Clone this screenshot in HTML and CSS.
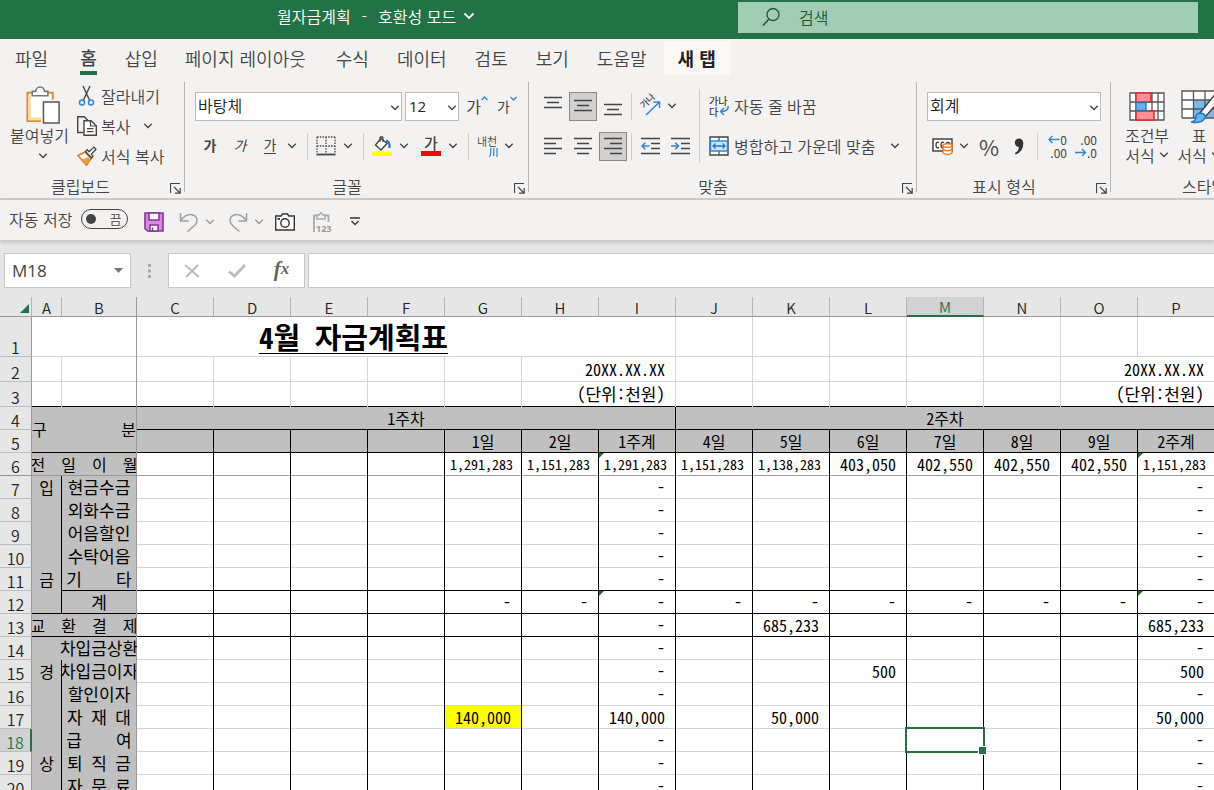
FILE: index.html
```html
<!DOCTYPE html>
<html lang="ko">
<head>
<meta charset="utf-8">
<meta name="viewport" content="width=device-width, initial-scale=1">
<title>월자금계획</title>
<link rel="stylesheet" href="styles.css">
</head>
<body>
<svg class="defs" aria-hidden="true">
  <symbol id="chev" viewBox="0 0 8 6"><path d="M1 1.2 4 4.2 7 1.2" fill="none" stroke="currentColor" stroke-width="1.1"/></symbol>
  <symbol id="launch" viewBox="0 0 11 11"><path d="M.5 10V.5H10M4 4l6 6M10.200 5v5.200H5" fill="none" stroke="#444" stroke-width="1.2"/></symbol>
</svg>

<header class="titlebar">
  <button class="doc-title" type="button"><span class="pre">월자금계획 <span class="dash"> - </span> 호환성 모드</span>
    <svg width="12" height="8" viewBox="0 0 12 8"><path d="M1.500 1.500 6 6l4.500-4.500" fill="none" stroke="#fff" stroke-width="1.800"/></svg>
  </button>
  <label class="search">
    <svg width="18" height="20" viewBox="0 0 18 20"><circle cx="11" cy="7.500" r="6" fill="none" stroke="#185c37" stroke-width="1.300"/><path d="M7 12 1 18.500" stroke="#185c37" stroke-width="1.500"/></svg>
    <input type="text" placeholder="검색" aria-label="검색">
  </label>
</header>

<nav class="tabs">
  <button class="tab tab-file" type="button">파일</button>
  <button class="tab tab-home" type="button"><span>홈</span></button>
  <button class="tab" type="button">삽입</button>
  <button class="tab tab-wide" type="button">페이지 레이아웃</button>
  <button class="tab" type="button">수식</button>
  <button class="tab" type="button">데이터</button>
  <button class="tab" type="button">검토</button>
  <button class="tab" type="button">보기</button>
  <button class="tab" type="button">도움말</button>
  <button class="tab tab-new" type="button">새 탭</button>
</nav>

<section class="ribbon">
  <div class="group g-clip">
    <div class="tools">
      <button class="big" type="button">
        <svg class="paste" width="36" height="40" viewBox="0 0 36 40"><path d="M2 7h26v29H2z" fill="#fff" stroke="#e08a2c" stroke-width="2"/><path d="M4.500 9.500v24H16" fill="none" stroke="#fbdc9c" stroke-width="2.500"/><path d="M7 10V5.500h3.500a4.500 4.500 0 0 1 9 0H23V10z" fill="#fff" stroke="#777" stroke-width="1.600"/><path d="M16 14h19v25H16z" fill="#f3f2f1"/><path d="M18.500 16.500h16V38h-16z" fill="#fff" stroke="#555" stroke-width="1.500"/></svg>
        <span>붙여넣기</span>
        <svg class="chev" width="10" height="8"><use href="#chev"/></svg>
      </button>
      <div class="side">
        <button type="button"><svg width="20" height="20" viewBox="0 0 20 20"><path d="M6 0l6.500 14M13 0 6.500 14" stroke="#444" stroke-width="1.400"/><circle cx="5" cy="16.500" r="2.500" fill="none" stroke="#2b88d8" stroke-width="1.500"/><circle cx="14" cy="16.500" r="2.500" fill="none" stroke="#2b88d8" stroke-width="1.500"/></svg>잘라내기</button>
        <button type="button"><svg width="20" height="20" viewBox="0 0 20 20"><path d="M6.500 16.500H.7V.7h6.500L11 4.500" fill="none" stroke="#444" stroke-width="1.400"/><path d="M7 4.700h7l5.300 5v9.500H7z" fill="#fff" stroke="#444" stroke-width="1.400"/><path d="M13.500 5v5H19M10 12.700h6.500M10 15.700h6.500" fill="none" stroke="#444" stroke-width="1.200"/></svg>복사<svg class="chev gap" width="10" height="8"><use href="#chev"/></svg></button>
        <button type="button"><svg width="20" height="20" viewBox="0 0 20 20"><path d="M1 9.500 8 6l6 6.500-4.500 6.800z" fill="#fff" stroke="#e07b1f" stroke-width="1.500"/><path d="M3 12c3 1.500 5 1 8-1l2 2.500-4 5z" fill="#f29a3c"/><path d="M8.500 5.500l6 6.500 1.500-1.700-1.700-2 4.700-5-2-2.200-5 4.600-1.700-2z" fill="#fff" stroke="#444" stroke-width="1.300"/></svg>서식 복사</button>
      </div>
    </div>
    <div class="caption"><span>클립보드</span><button type="button" aria-label="클립보드 옵션"><svg width="11" height="11"><use href="#launch"/></svg></button></div>
  </div>

  <div class="group g-font">
    <div class="tools rows">
      <div class="row">
        <span class="combo font-name"><select aria-label="글꼴"><option>바탕체</option></select><svg class="chev" width="10" height="8"><use href="#chev"/></svg></span>
        <span class="combo font-size"><select aria-label="글꼴 크기"><option>12</option></select><svg class="chev" width="10" height="8"><use href="#chev"/></svg></span>
        <button class="ic" type="button" aria-label="글꼴 크기 크게"><span class="ga-l">가</span><svg class="up" width="7" height="16" viewBox="0 0 7 16"><path d="M.5 4 3.500 1l3 3" fill="none" stroke="#2b88d8" stroke-width="1.400"/></svg></button>
        <button class="ic" type="button" aria-label="글꼴 크기 작게"><span class="ga-m">가</span><svg class="up" width="7" height="16" viewBox="0 0 7 16"><path d="M.5 1l3 3 3-3" fill="none" stroke="#2b88d8" stroke-width="1.400"/></svg></button>
      </div>
      <div class="row">
        <button class="ic ga bold" type="button">가</button>
        <button class="ic ga ital" type="button">가</button>
        <button class="ic ga under" type="button"><span>가</span></button>
        <button class="dd" type="button" aria-label="밑줄 종류"><svg class="chev" width="10" height="8"><use href="#chev"/></svg></button>
        <i class="sep"></i>
        <button class="ic" type="button" aria-label="테두리"><svg width="20" height="20" viewBox="0 0 20 20"><path d="M1 1h18M1 10h18M1 1v16M10 1v16M19 1v16" fill="none" stroke="#444" stroke-width="1.300" stroke-dasharray="1.500 1.300"/><path d="M.5 18.500h19" stroke="#444" stroke-width="1.800"/></svg></button>
        <button class="dd" type="button" aria-label="테두리 종류"><svg class="chev" width="10" height="8"><use href="#chev"/></svg></button>
        <i class="sep"></i>
        <button class="ic" type="button" aria-label="채우기 색"><svg width="20" height="20" viewBox="0 0 20 20"><path d="M9 2.500 3.500 9l5.500 5L15 7.500z" fill="#fff" stroke="#444" stroke-width="1.400"/><path d="M8 6V1.500q1.500-1.500 3 0V6" fill="none" stroke="#444" stroke-width="1.200"/><path d="M14 4.500q4 1 3.500 7.500" fill="none" stroke="#1f78c1" stroke-width="2.200"/><path d="M0 15.500h20V20H0z" fill="#ff0"/></svg></button>
        <button class="dd" type="button" aria-label="채우기 색 선택"><svg class="chev" width="10" height="8"><use href="#chev"/></svg></button>
        <button class="ic ga color" type="button" aria-label="글꼴 색"><span>가</span></button>
        <button class="dd" type="button" aria-label="글꼴 색 선택"><svg class="chev" width="10" height="8"><use href="#chev"/></svg></button>
        <i class="sep"></i>
        <button class="ic ruby" type="button" aria-label="윗주"><span>내천</span><svg width="9" height="9" viewBox="0 0 9 9"><path d="M1.700 0v5q0 2-1.200 4M4.700 0v8M8 0v9" fill="none" stroke="#2b88d8" stroke-width="1.200"/></svg></button>
        <button class="dd" type="button" aria-label="윗주 설정"><svg class="chev" width="10" height="8"><use href="#chev"/></svg></button>
      </div>
    </div>
    <div class="caption"><span>글꼴</span><button type="button" aria-label="글꼴 옵션"><svg width="11" height="11"><use href="#launch"/></svg></button></div>
  </div>

  <div class="group g-align">
    <div class="tools split">
      <div class="rows align-left">
        <div class="row">
          <button class="ic" type="button" aria-label="위쪽 맞춤"><svg width="18" height="20" viewBox="0 0 18 20"><path d="M0 1.500h18M3 6.500h12M0 11.500h18" stroke="#444" stroke-width="1.500"/></svg></button>
          <button class="ic on" type="button" aria-label="가운데 맞춤"><svg width="18" height="20" viewBox="0 0 18 20"><path d="M0 4.500h18M3 9.500h12M0 14.500h18" stroke="#444" stroke-width="1.500"/></svg></button>
          <button class="ic" type="button" aria-label="아래쪽 맞춤"><svg width="18" height="20" viewBox="0 0 18 20"><path d="M0 8.500h18M3 13.500h12M0 18.500h18" stroke="#444" stroke-width="1.500"/></svg></button>
          <i class="sep near"></i>
          <button class="ic" type="button" aria-label="방향"><svg width="22" height="22" viewBox="0 0 22 22"><text transform="translate(5 14) rotate(-45)" class="rot">가나</text><path d="M7 20 20 7.500M14.500 7h6v6" fill="none" stroke="#2b88d8" stroke-width="1.500"/></svg></button>
          <button class="dd" type="button" aria-label="방향 선택"><svg class="chev" width="10" height="8"><use href="#chev"/></svg></button>
        </div>
        <div class="row">
          <button class="ic" type="button" aria-label="왼쪽 맞춤"><svg width="18" height="18" viewBox="0 0 18 18"><path d="M0 1.500h18M0 6.500h12M0 11.500h18M0 16.500h12" stroke="#444" stroke-width="1.500"/></svg></button>
          <button class="ic" type="button" aria-label="텍스트 가운데 맞춤"><svg width="18" height="18" viewBox="0 0 18 18"><path d="M0 1.500h18M3 6.500h12M0 11.500h18M3 16.500h12" stroke="#444" stroke-width="1.500"/></svg></button>
          <button class="ic on" type="button" aria-label="오른쪽 맞춤"><svg width="18" height="18" viewBox="0 0 18 18"><path d="M0 1.500h18M6 6.500h12M0 11.500h18M6 16.500h12" stroke="#444" stroke-width="1.500"/></svg></button>
          <i class="sep near"></i>
          <button class="ic" type="button" aria-label="내어쓰기"><svg width="19" height="18" viewBox="0 0 19 18"><path d="M0 1.500h19M10 6.500h9M10 11.500h9M0 16.500h19" stroke="#444" stroke-width="1.500"/><path d="M8.500 9H1M4.300 5.700 1 9l3.300 3.300" fill="none" stroke="#2b88d8" stroke-width="1.500"/></svg></button>
          <button class="ic" type="button" aria-label="들여쓰기"><svg width="19" height="18" viewBox="0 0 19 18"><path d="M0 1.500h19M10 6.500h9M10 11.500h9M0 16.500h19" stroke="#444" stroke-width="1.500"/><path d="M0 9h7.500M4.200 5.700 7.500 9l-3.300 3.300" fill="none" stroke="#2b88d8" stroke-width="1.500"/></svg></button>
        </div>
      </div>
      <i class="vline"></i>
      <div class="rows">
        <button class="row label-btn" type="button"><span class="wrap-ic"><span>가나</span><span>다</span><svg width="10" height="10" viewBox="0 0 10 10"><path d="M9.200 0q.5 5.500-7.500 5.500M5 2 1.500 5.500 5 9" fill="none" stroke="#2b88d8" stroke-width="1.500"/></svg></span>자동 줄 바꿈</button>
        <button class="row label-btn" type="button"><svg class="merge" width="20" height="20" viewBox="0 0 20 20"><path d="M1 1h18v18H1z" fill="#fff" stroke="#444" stroke-width="1.400"/><path d="M10 1v4M10 15v4" stroke="#444" stroke-width="1.200"/><path d="M1.500 5h17v10h-17z" fill="#cfe6f8" stroke="#2b88d8" stroke-width="1.500"/><path d="M4 10h12M6.500 7.500 4 10l2.500 2.500M13.500 7.500 16 10l-2.500 2.500" fill="none" stroke="#1f78c1" stroke-width="1.300"/></svg>병합하고 가운데 맞춤<svg class="chev gap" width="10" height="8"><use href="#chev"/></svg></button>
      </div>
    </div>
    <div class="caption"><span>맞춤</span><button type="button" aria-label="맞춤 옵션"><svg width="11" height="11"><use href="#launch"/></svg></button></div>
  </div>

  <div class="group g-num">
    <div class="tools rows">
      <div class="row">
        <span class="combo num-format"><select aria-label="표시 형식"><option>회계</option></select><svg class="chev" width="10" height="8"><use href="#chev"/></svg></span>
      </div>
      <div class="row">
        <button class="ic" type="button" aria-label="회계 표시 형식"><svg width="21" height="18" viewBox="0 0 21 18"><path d="M1 2h19v12H1z" fill="#fff" stroke="#444" stroke-width="1.500"/><path d="M7 5.500q-3-1-3 2.500t3 2.500M12 5.500q-3-1-3 2.500t3 2.500M14 8q0-2.500 2-2.500T18 8" fill="none" stroke="#444" stroke-width="1.400"/><path d="M11 8.500v7.500q4.500 3 9 0V8.500z" fill="#fff" stroke="#e07b1f" stroke-width="1.400"/><ellipse cx="15.500" cy="8.500" rx="4.500" ry="1.800" fill="#fff" stroke="#e07b1f" stroke-width="1.400"/><path d="M11 12.300q4.500 3 9 0" fill="none" stroke="#e07b1f" stroke-width="1.400"/></svg></button>
        <button class="dd" type="button" aria-label="통화 선택"><svg class="chev" width="10" height="8"><use href="#chev"/></svg></button>
        <button class="ic percent" type="button">%</button>
        <button class="ic" type="button" aria-label="쉼표 스타일"><svg width="11" height="17" viewBox="0 0 11 17"><circle cx="5" cy="4.700" r="4.200" fill="#333"/><path d="M9.200 4.500Q10 13 1.500 16.500L1 15Q5 13 5 8z" fill="#333"/></svg></button>
        <i class="sep near"></i>
        <button class="ic dec" type="button" aria-label="자릿수 늘림"><span><svg width="12" height="9" viewBox="0 0 12 9"><path d="M11.500 4.500H1M4.500 1 1 4.500 4.500 8" fill="none" stroke="#2b88d8" stroke-width="1.400"/></svg>0</span><span>.00</span></button>
        <button class="ic dec" type="button" aria-label="자릿수 줄임"><span>.00</span><span><svg width="12" height="9" viewBox="0 0 12 9"><path d="M0 4.500h10.500M7 1l3.500 3.500L7 8" fill="none" stroke="#2b88d8" stroke-width="1.400"/></svg>.0</span></button>
      </div>
    </div>
    <div class="caption"><span>표시 형식</span><button type="button" aria-label="표시 형식 옵션"><svg width="11" height="11"><use href="#launch"/></svg></button></div>
  </div>

  <div class="group g-style">
    <div class="tools">
      <button class="big cond" type="button">
        <svg width="36" height="30" viewBox="0 0 36 30"><path d="M1 1h34v27H1z" fill="#fff"/><path d="M1 1h34v27H1zM1 10h34M1 19h34M7 1v27M29 1v27M23 1v27" fill="none" stroke="#555" stroke-width="1.300"/><path d="M7 1h15v9H7zM7 19h18v9H7z" fill="#ff8f94" stroke="#e3262e" stroke-width="1.500"/><path d="M7 10.500h10v8H7z" fill="#6cb1ee" stroke="#1f78c1" stroke-width="1.300"/></svg>
        <span>조건부</span>
        <span>서식<svg class="chev" width="10" height="8"><use href="#chev"/></svg></span>
      </button>
      <button class="big" type="button">
        <svg width="36" height="34" viewBox="0 0 36 34"><path d="M1 1h36v27H1z" fill="#fff"/><path d="M12 10h26v18H12z" fill="#7ab9f0"/><path d="M1 28V1h36M1 10h36M1 19h36M1 28h36M12.500 1v27M24 1v27" fill="none" stroke="#555" stroke-width="1.300"/><path d="M36 2 19 23l5 4 16-18z" fill="#fff" stroke="#444" stroke-width="1.400"/><path d="M10 32q5-1 5-5t5-4q5 1 4 5-3 6-14 4z" fill="#6cb1ee" stroke="#1f78c1" stroke-width="1.500"/></svg>
        <span>표</span>
        <span>서식<svg class="chev" width="10" height="8"><use href="#chev"/></svg></span>
      </button>
    </div>
    <div class="caption"><span>스타일</span></div>
  </div>
</section>

<section class="qat">
  <label class="autosave"><span>자동 저장</span><input type="checkbox"><span class="switch">끔</span></label>
  <button class="q-save" type="button" aria-label="저장"><svg width="20" height="20" viewBox="0 0 20 20"><path d="M1 1h18v18H3.500L1 16.500z" fill="#d58be0" stroke="#8a2f9c" stroke-width="1.600"/><path d="M5 1h10v7H5zM6 13h8v6H6z" fill="#fff" stroke="#8a2f9c" stroke-width="1.500"/><path d="M8.500 15.500V19" stroke="#8a2f9c" stroke-width="1.500"/></svg></button>
  <button class="q-undo" type="button" aria-label="실행 취소"><svg width="20" height="20" viewBox="0 0 20 20"><path d="M1.500 1v8h8M1.500 9Q6 2 12 2.500q6 1 6 6 0 3-3 5.500L8.500 19.500" fill="none" stroke="#a0a0a0" stroke-width="1.500"/></svg></button>
  <button class="q-dd" type="button" aria-label="실행 취소 목록"><svg class="chev" width="10" height="8"><use href="#chev"/></svg></button>
  <button class="q-undo" type="button" aria-label="다시 실행"><svg width="20" height="20" viewBox="0 0 20 20"><path d="M18.500 1v8h-8M18.500 9Q14 2 8 2.500q-6 1-6 6 0 3 3 5.500l6.500 5.500" fill="none" stroke="#a0a0a0" stroke-width="1.500"/></svg></button>
  <button class="q-dd" type="button" aria-label="다시 실행 목록"><svg class="chev" width="10" height="8"><use href="#chev"/></svg></button>
  <button class="q-cam" type="button" aria-label="카메라"><svg width="20" height="18" viewBox="0 0 20 18"><path d="M.7 3h5.500L7.500 1h5l1.300 2h5.500v14H.7z" fill="#fff" stroke="#333" stroke-width="1.400"/><circle cx="10" cy="10" r="4.200" fill="none" stroke="#333" stroke-width="1.400"/><path d="M2.500 5h2.500v1.800H2.500z" fill="#333"/></svg></button>
  <button class="q-123" type="button" aria-label="값 붙여넣기"><svg width="20" height="22" viewBox="0 0 20 22"><path d="M2 21V4.500h14.500V11" fill="none" stroke="#aaa" stroke-width="1.800"/><path d="M5 8V4h2.500q1.500-5 3 0H13v4z" fill="#f3f2f1" stroke="#aaa" stroke-width="1.400"/><text x="4" y="21" class="n123">123</text></svg></button>
  <button class="q-more" type="button" aria-label="빠른 실행 도구 모음 사용자 지정"><svg width="10" height="9" viewBox="0 0 10 9"><path d="M0 1h10M1.500 4 5 7.500 8.500 4" fill="none" stroke="#333" stroke-width="1.300"/></svg></button>
</section>

<section class="formula">
  <div class="namebox"><input type="text" value="M18" aria-label="이름 상자"><svg width="9" height="5" viewBox="0 0 9 5"><path d="M0 0h9L4.500 5z" fill="#777"/></svg></div>
  <svg class="grip" width="3" height="14" viewBox="0 0 3 14"><path d="M0 0h3v3H0zM0 5.500h3v3H0zM0 11h3v3H0z" fill="#aaa"/></svg>
  <div class="fx">
    <button type="button" aria-label="취소"><svg width="16" height="14" viewBox="0 0 16 14"><path d="M1 1l14 12M14 1 2 13" stroke="#bbb" stroke-width="2"/></svg></button>
    <button type="button" aria-label="입력"><svg width="18" height="14" viewBox="0 0 18 14"><path d="M1 7.500 6.500 12 17 1" fill="none" stroke="#bbb" stroke-width="2.800"/></svg></button>
    <button type="button" class="fxi">f<small>x</small></button>
  </div>
  <input class="fbar" type="text" aria-label="수식 입력줄">
</section>

<main class="sheet">
<table>
<colgroup><col class="c-h"><col class="c-a"><col class="c-b"><col span="13" class="c-n"></colgroup>
<thead><tr><th class="corner"><svg width="9" height="9" viewBox="0 0 9 9"><path d="M9 0v9H0z" fill="#217346"/></svg></th><th>A</th><th class="fz">B</th><th>C</th><th>D</th><th>E</th><th>F</th><th>G</th><th>H</th><th>I</th><th>J</th><th>K</th><th>L</th><th class="sel">M</th><th>N</th><th>O</th><th>P</th></tr></thead>
<tbody class="top">
<tr class="r1"><th>1</th><td colspan="9" class="title"><span>4월 자금계획표</span></td><td></td><td></td><td></td><td></td><td></td><td></td><td></td></tr>
<tr class="r2"><th>2</th><td></td><td class="fz"></td><td></td><td></td><td></td><td></td><td></td><td colspan="2" class="meta">20XX.XX.XX</td><td></td><td></td><td></td><td></td><td></td><td colspan="2" class="meta">20XX.XX.XX</td></tr>
<tr class="r2 kb"><th>3</th><td></td><td class="fz"></td><td></td><td></td><td></td><td></td><td></td><td colspan="2" class="meta unit">(단위:천원)</td><td></td><td></td><td></td><td></td><td></td><td colspan="2" class="meta unit">(단위:천원)</td></tr>
</tbody>
<tbody class="heads">
<tr><th>4</th><td colspan="2" rowspan="2" class="fz"><div class="spread"><span>구</span><span>분</span></div></td><td colspan="7">1주차</td><td colspan="7">2주차</td></tr>
<tr><th>5</th><td></td><td></td><td></td><td></td><td>1일</td><td>2일</td><td>1주계</td><td>4일</td><td>5일</td><td>6일</td><td>7일</td><td>8일</td><td>9일</td><td>2주계</td></tr>
</tbody>
<tbody class="data">
<tr class="fr"><th>6</th><td colspan="2" class="lab fz"><div class="pre">전  일  이  월</div></td><td></td><td></td><td></td><td></td><td class="long">1,291,283</td><td class="long">1,151,283</td><td class="long flag">1,291,283</td><td class="long">1,151,283</td><td class="long">1,138,283</td><td>403,050</td><td>402,550</td><td>402,550</td><td>402,550</td><td class="long flag">1,151,283</td></tr>
<tr><th>7</th><td class="a">입</td><td class="b fz"><div>현금수금</div></td><td></td><td></td><td></td><td></td><td></td><td></td><td>-</td><td></td><td></td><td></td><td></td><td></td><td></td><td>-</td></tr>
<tr><th>8</th><td class="a"></td><td class="b fz"><div>외화수금</div></td><td></td><td></td><td></td><td></td><td></td><td></td><td>-</td><td></td><td></td><td></td><td></td><td></td><td></td><td>-</td></tr>
<tr><th>9</th><td class="a"></td><td class="b fz"><div>어음할인</div></td><td></td><td></td><td></td><td></td><td></td><td></td><td>-</td><td></td><td></td><td></td><td></td><td></td><td></td><td>-</td></tr>
<tr><th>10</th><td class="a"></td><td class="b fz"><div>수탁어음</div></td><td></td><td></td><td></td><td></td><td></td><td></td><td>-</td><td></td><td></td><td></td><td></td><td></td><td></td><td>-</td></tr>
<tr class="kb"><th>11</th><td class="a open">금</td><td class="b fz"><div class="pre">기    타</div></td><td></td><td></td><td></td><td></td><td></td><td></td><td>-</td><td></td><td></td><td></td><td></td><td></td><td></td><td>-</td></tr>
<tr class="kb"><th>12</th><td class="a"></td><td class="b fz"><div>계</div></td><td></td><td></td><td></td><td></td><td>-</td><td>-</td><td class="flag">-</td><td>-</td><td>-</td><td>-</td><td>-</td><td>-</td><td>-</td><td class="flag">-</td></tr>
<tr class="kb"><th>13</th><td colspan="2" class="lab fz"><div class="pre">교  환  결  제</div></td><td></td><td></td><td></td><td></td><td></td><td></td><td>-</td><td></td><td>685,233</td><td></td><td></td><td></td><td></td><td>685,233</td></tr>
<tr><th>14</th><td class="a noline"></td><td class="b fz spill"><div>차입금상환</div></td><td></td><td></td><td></td><td></td><td></td><td></td><td>-</td><td></td><td></td><td></td><td></td><td></td><td></td><td>-</td></tr>
<tr><th>15</th><td class="a">경</td><td class="b fz"><div>차입금이자</div></td><td></td><td></td><td></td><td></td><td></td><td></td><td>-</td><td></td><td></td><td>500</td><td></td><td></td><td></td><td>500</td></tr>
<tr><th>16</th><td class="a"></td><td class="b fz"><div>할인이자</div></td><td></td><td></td><td></td><td></td><td></td><td></td><td>-</td><td></td><td></td><td></td><td></td><td></td><td></td><td>-</td></tr>
<tr><th>17</th><td class="a"></td><td class="b fz"><div class="pre">자 재 대</div></td><td></td><td></td><td></td><td></td><td class="hl">140,000</td><td></td><td>140,000</td><td></td><td>50,000</td><td></td><td></td><td></td><td></td><td>50,000</td></tr>
<tr><th class="sel">18</th><td class="a"></td><td class="b fz"><div class="pre">급    여</div></td><td></td><td></td><td></td><td></td><td></td><td></td><td>-</td><td></td><td></td><td></td><td class="cursor"></td><td></td><td></td><td>-</td></tr>
<tr><th>19</th><td class="a">상</td><td class="b fz"><div class="pre">퇴 직 금</div></td><td></td><td></td><td></td><td></td><td></td><td></td><td>-</td><td></td><td></td><td></td><td></td><td></td><td></td><td>-</td></tr>
<tr><th>20</th><td class="a"></td><td class="b fz"><div class="pre">자 문 료</div></td><td></td><td></td><td></td><td></td><td></td><td></td><td>-</td><td></td><td></td><td></td><td></td><td></td><td></td><td>-</td></tr>
</tbody>
</table>
</main>
</body>
</html>
```

FILE: styles.css
```css
:root {
  --green: #217346;
  --ui: "Noto Sans CJK KR", sans-serif;
  --cell: "Noto Sans Mono CJK KR", "Noto Sans CJK KR", monospace;
  --grid: #d4d4d4;
  --freeze: #999;
}
* { box-sizing: border-box; }
body {
  margin: 0;
  height: 100vh;
  display: flex;
  flex-direction: column;
  overflow: hidden;
  background: #e6e6e6;
  color: #444;
  font: 350 16px/20px var(--ui);
}
button, input, select { font: inherit; color: inherit; }
button { border: 0; padding: 0; background: none; white-space: nowrap; }
svg { display: block; flex: none; overflow: visible; }
.defs { position: absolute; width: 0; height: 0; overflow: hidden; }
.pre { white-space: pre; }

/* title bar */
.titlebar {
  flex: none;
  height: 39px;
  display: flex;
  align-items: flex-start;
  background: var(--green);
  color: #fff;
}
.doc-title {
  display: flex;
  align-items: center;
  gap: 7px;
  height: 32px;
  width: 738px;
  padding-left: 277px;
}
.dash { padding: 0 2px; }
.search {
  flex: 1;
  display: flex;
  align-items: center;
  height: 31px;
  margin: 2px 16px 0 0;
  padding: 0 0 2px 24px;
  background: #a0cdb4;
}
.search input {
  flex: 1;
  margin-left: 19px;
  padding: 0;
  border: 0;
  background: none;
  outline: 0;
}
.search input::placeholder { color: #185c37; opacity: 1; }

/* tabs */
.tabs { flex: none; display: flex; height: 37px; padding: 2px 0 0 1px; background: #f3f2f1; }
.tab { padding: 0 14px 2px; font-size: 18px; }
.tab-file { padding-right: 18px; }
.tab-wide { padding: 0 16px 2px 13px; }
.tab-home { padding-bottom: 0; font-weight: 500; }
.tab-home span { display: block; height: 33px; padding-top: 5px; border-bottom: 4px solid var(--green); }
.tab-new { height: 34px; padding-bottom: 0; margin-left: 3px; background: #faf9f8; font-weight: 700; color: #222; }

/* ribbon */
.ribbon {
  flex: none;
  display: flex;
  padding-top: 5px;
  background: #f3f2f1;
  border-bottom: 2px solid #d0cecc;
}
.group { position: relative; flex: none; display: flex; flex-direction: column; }
.group:not(.g-style)::after {
  content: "";
  position: absolute;
  right: 0;
  top: 1px;
  bottom: 6px;
  width: 1px;
  background: #b8b6b4;
}
.g-clip { width: 185px; }
.g-font { width: 344px; }
.g-align { width: 388px; }
.g-num { width: 194px; }
.g-style { flex: 1 0 180px; }
.tools { display: flex; height: 90px; }
.rows { display: flex; flex-direction: column; gap: 10px; padding-top: 10px; }
.row { display: flex; align-items: center; height: 30px; }
.caption { display: flex; align-items: center; justify-content: center; height: 27px; padding-top: 3px; position: relative; }
.g-clip .caption { padding-right: 24px; }
.g-font .caption, .g-align .caption, .g-num .caption { padding-right: 20px; }
.g-style .caption { padding-left: 6px; }
.caption button { position: absolute; right: 4px; top: 12px; }
.chev { width: 10px; height: 8px; }
.big { display: flex; flex-direction: column; align-items: center; }
.big > span { display: flex; align-items: center; gap: 4px; }
.g-clip .big { width: 67px; margin-left: 6px; padding-top: 5px; }
.g-clip .paste { height: 39px; margin-left: 6px; }
.g-clip .big .chev { margin: 7px 0 0 6px; }
.side { display: flex; flex-direction: column; padding-left: 4px; }
.side button { display: flex; align-items: center; height: 30px; gap: 4px; }
.side .gap { margin-left: 9px; }
.g-font .tools { padding-left: 10px; }
.combo { position: relative; display: block; height: 29px; margin-right: 3px; }
.combo select {
  appearance: none;
  width: 100%;
  height: 100%;
  padding: 0 2px 2px;
  border: 1px solid #bbb;
  border-radius: 0;
  background: #fff;
  color: #222;
}
.combo .chev { position: absolute; right: 2px; top: 12px; pointer-events: none; }
.font-name { width: 207px; }
.font-size { width: 54px; font-family: "Open Sans", sans-serif; font-size: 15px; }
.font-size select { padding: 0 3px; font-weight: 400; }
.num-format { width: 174px; }
.ic { width: 30px; height: 30px; display: flex; align-items: center; justify-content: center; }
.ic.on { width: 28px; height: 29px; margin: 0 1px; background: #d2d0ce; border: 1px solid #8a8886; }
.dd { width: 14px; height: 30px; display: flex; align-items: center; justify-content: center; }
.sep { width: 1px; height: 27px; margin: 0 3px 0 8px; background: #d0cecc; }
.sep.near { margin: 0 3px; }
.ga { font-size: 14px; font-weight: 400; padding-bottom: 2px; }
.ga.bold { font-weight: 700; }
.ga.ital { font-style: italic; }
.ga.under span { border-bottom: 1px solid #444; line-height: 17px; }
.ga.color { margin-left: 5px; padding: 0; font-size: 15px; font-weight: 500; }
.ga.color span { width: 20px; height: 20px; line-height: 14px; border-bottom: 5px solid #e80c0c; }
.ga-l { font-size: 16px; font-weight: 400; }
.ga-m { font-size: 14px; font-weight: 400; }
.up { align-self: flex-start; margin-top: 5px; }
.ruby { position: relative; font-size: 11px; align-items: flex-start; }
.ruby svg { position: absolute; right: 4px; bottom: 4px; }
.rot { font: 500 9px var(--ui); fill: #444; }
.g-align .tools { padding-left: 9px; }
.align-left { width: 161px; }
.vline { width: 1px; height: 74px; margin: 8px 4px 0 0; background: #d0cecc; }
.wrap-ic { position: relative; width: 30px; padding-left: 5px; text-align: left; font: 500 10px/11px var(--ui); }
.wrap-ic span { display: block; }
.wrap-ic svg { position: absolute; left: 15px; top: 11px; }
.label-btn { padding-bottom: 1px; }
.merge { margin: 0 5px; }
.label-btn .gap { margin-left: 15px; }
.g-num .tools { padding-left: 10px; }
.percent { font-size: 22px; margin-left: 3px; }
.dec { flex-direction: column; align-items: flex-end; padding-right: 4px; font: 400 12px/14px "Noto Sans CJK KR", sans-serif; }
.dec span { display: flex; align-items: center; height: 13px; }
.g-style .tools { padding-left: 10px; }
.g-style .big { width: 52px; padding-top: 8px; }
.g-style .big > svg { height: 36px; }

/* quick access */
.qat {
  flex: none;
  display: flex;
  align-items: center;
  height: 41px;
  padding: 3px 0 0 9px;
  background: #f3f2f1;
  border-bottom: 1px solid #d0cecc;
  box-shadow: 0 1px 4px #bbb;
}
.autosave { display: flex; align-items: center; gap: 9px; height: 26px; margin-bottom: 6px; }
.autosave input { position: absolute; opacity: 0; }
.switch {
  position: relative;
  width: 47px;
  height: 20px;
  padding-left: 27px;
  border: 1px solid #444;
  border-radius: 10px;
  font-size: 13px;
  line-height: 17px;
}
.switch::before {
  content: "";
  position: absolute;
  left: 4px;
  top: 4px;
  width: 10px;
  height: 10px;
  border-radius: 50%;
  background: #444;
}
.q-save { margin-left: 16px; }
.q-undo { margin-left: 15px; }
.q-dd { margin-left: 6px; color: #999; }
.q-dd + .q-undo { margin-left: 13px; }
.q-cam { margin-left: 11px; }
.q-123 { margin-left: 17px; }
.q-more { margin-left: 18px; }
.n123 { font: 700 9px "Open Sans", sans-serif; fill: #999; }

/* formula bar */
.formula { flex: none; display: flex; align-items: center; padding: 12px 0 9px 4px; }
.namebox { display: flex; align-items: center; width: 127px; height: 35px; padding: 0 7px; background: #fff; border: 1px solid #c6c6c6; }
.namebox input { flex: 1; min-width: 0; padding: 0; border: 0; outline: 0; font: 400 17px "Open Sans", sans-serif; }
.grip { margin: 0 17px; }
.fx { display: flex; width: 137px; height: 35px; background: #fff; border: 1px solid #c6c6c6; }
.fx button { flex: 1; display: flex; align-items: center; justify-content: center; }
.fx .fxi { padding-bottom: 3px; font: italic 700 21px "Liberation Serif", serif; color: #666; }
.fxi small { font-size: 17px; }
.fbar { flex: 1; min-width: 0; height: 35px; margin-left: 3px; border: 1px solid #c6c6c6; border-right: 0; background: #fff; }

/* sheet */
.sheet { flex: 1; min-height: 0; overflow: hidden; }
table { table-layout: fixed; border-collapse: separate; border-spacing: 0; width: 1215px; font: 400 16px/20px var(--cell); color: #000; }
.c-h { width: 32px; }
.c-a { width: 30px; }
.c-b { width: 75px; }
.c-n { width: 77px; }
th { padding: 0; background: #e6e6e6; font: 350 16px/18px var(--ui); color: #222; vertical-align: bottom; }
thead th { height: 20px; font-size: 15px; line-height: 17px; border-right: 1px solid #b5b5b5; border-bottom: 1px solid var(--freeze); }
thead th.fz { border-right-color: var(--freeze); }
thead th.sel { background: #d2d2d2; color: var(--green); border-bottom: 2px solid var(--green); }
.corner svg { margin: 0 0 3px 20px; }
tbody th { border-right: 1px solid var(--freeze); border-bottom: 1px solid #bdbdbd; }
tbody th.sel { background: #d2d2d2; color: var(--green); border-right: 2px solid var(--green); }
td {
  --line: var(--grid);
  position: relative;
  height: 23px;
  padding: 0 0 2px;
  background: #fff;
  white-space: nowrap;
  border-right: 1px solid var(--grid);
  box-shadow: inset 0 -1px var(--line);
}
.r1 td { height: 40px; }
.r2 td { height: 25px; }
.title { text-align: center; }
.title::before { content: ""; position: absolute; left: 104px; top: 0; bottom: 0; width: 1px; background: var(--freeze); }
.title span { font-size: 29px; line-height: 32px; font-weight: 700; text-decoration: underline; text-decoration-thickness: 1px; text-underline-offset: 4px; text-decoration-skip-ink: none; }
.meta { text-align: right; padding-right: 10px; }
.unit { font-size: 17px; }
.heads td { --line: #000; background: #c0c0c0; border-right-color: #000; text-align: center; }
.spread { display: flex; justify-content: space-between; }
.data td { padding-right: 10px; text-align: right; border-right-color: #000; }
.data .long { padding-right: 8px; font-size: 14px; }
.data .a, .data .b, .data .lab { --line: #c0c0c0; padding-right: 0; background: #c0c0c0; text-align: center; }
.data .b { font-size: 17px; }
.data .noline { border-right-color: #c0c0c0; }
.b div, .lab div { display: flex; justify-content: center; overflow: hidden; }
.b.spill div { overflow: visible; }
.kb td, .data .kb td { --line: #000; }
.data .kb .open { --line: #c0c0c0; }
.data .fr td { --line: var(--freeze); }
.fr th { border-bottom-color: var(--freeze); }
td.fz, .data td.fz, .heads td.fz { border-right-color: var(--freeze); }
.data .hl { background: #ff0; }
.flag::before { content: ""; position: absolute; left: 0; top: 0; border-top: 5px solid #1e6b2e; border-right: 5px solid transparent; }
.cursor::before { content: ""; position: absolute; z-index: 1; inset: -2px -2px -1px; border: 2px solid var(--green); }
.cursor::after { content: ""; position: absolute; z-index: 2; right: -4px; bottom: -3px; width: 7px; height: 7px; background: var(--green); border: 1px solid #fff; }
```
